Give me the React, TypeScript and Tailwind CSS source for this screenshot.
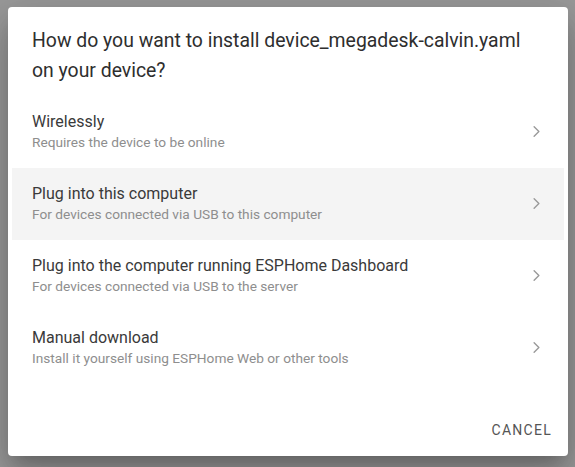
import { ChevronRight } from "lucide-react";

const options = [
  { title: "Wirelessly", sub: "Requires the device to be online" },
  { title: "Plug into this computer", sub: "For devices connected via USB to this computer", active: true },
  { title: "Plug into the computer running ESPHome Dashboard", sub: "For devices connected via USB to the server" },
  { title: "Manual download", sub: "Install it yourself using ESPHome Web or other tools" },
];

export default function App() {
  return (
    <div className="w-[575px] h-[467px] bg-[#9a9a9a] pl-[8px] pt-[7px] font-['Roboto',sans-serif]">
      <div className="w-[560px] h-[449px] bg-white rounded-[4px] shadow-[0_11px_15px_-7px_rgba(0,0,0,0.2),0_24px_38px_3px_rgba(0,0,0,0.14),0_9px_46px_8px_rgba(0,0,0,0.12)] flex flex-col">
        <h2 className="px-[24px] pt-[19px] text-[19.4px] leading-[29.5px] text-[#2e2e2e] font-normal">
          How do you want to install device_megadesk-calvin.yaml on your device?
        </h2>

        <ul className="mt-[10.5px] px-[4px]">
          {options.map((o) => (
            <li
              key={o.title}
              className={`h-[72px] flex items-center pl-[20px] pr-[18px] ${o.active ? "bg-[#f4f4f4]" : ""}`}
            >
              <div className="flex-1 flex flex-col pt-[2px]">
                <span className="text-[16px] leading-[20px] text-[#3a3a3a]">{o.title}</span>
                <span className="text-[13.7px] leading-[21px] text-[#8e8e8e]">{o.sub}</span>
              </div>
              <ChevronRight size={19} strokeWidth={1.75} className="text-[#999]" />
            </li>
          ))}
        </ul>

        <div className="mt-auto flex justify-end p-[8px]">
          <button className="h-[36px] px-[8px] text-[14px] font-normal tracking-[0.09em] text-[#555] uppercase">
            Cancel
          </button>
        </div>
      </div>
    </div>
  );
}
